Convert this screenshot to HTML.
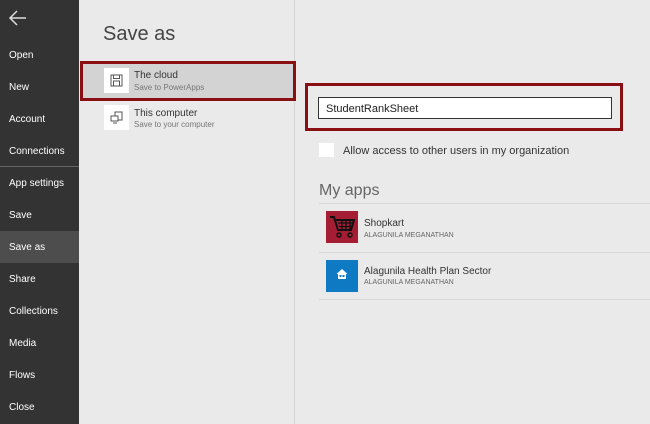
<!DOCTYPE html>
<html><head><meta charset="utf-8"><style>
*{margin:0;padding:0;box-sizing:border-box}
body{width:650px;height:424px;overflow:hidden;background:#eaeaea;font-family:"Liberation Sans",sans-serif;position:relative}
#side{position:absolute;left:0;top:0;width:79px;height:424px;background:#333333;color:#fff}
.mi{position:absolute;left:9px;font-size:10px;color:#fff;margin-top:1px}
#sel{position:absolute;left:0;top:231px;width:79px;height:32px;background:#4d4d4d}
#sep{position:absolute;left:0;top:166px;width:79px;height:1px;background:#666}
#mid{position:absolute;left:79px;top:0;width:216px;height:424px;background:#eaeaea;border-right:1px solid #d4d4d4}
.abs{position:absolute}
</style></head><body>
<div id="side">
<svg class="abs" style="left:8px;top:9px" width="20" height="18" viewBox="0 0 20 18"><path d="M18 9H2M9 2L2 9l7 7" fill="none" stroke="#ddd" stroke-width="1.5"/></svg>
<div id="sep"></div>
<div id="sel"></div>
<div class="mi" style="top:49px">Open</div>
<div class="mi" style="top:81px">New</div>
<div class="mi" style="top:113px">Account</div>
<div class="mi" style="top:145px">Connections</div>
<div class="mi" style="top:177px">App settings</div>
<div class="mi" style="top:209px">Save</div>
<div class="mi" style="top:241px">Save as</div>
<div class="mi" style="top:273px">Share</div>
<div class="mi" style="top:305px">Collections</div>
<div class="mi" style="top:337px">Media</div>
<div class="mi" style="top:369px">Flows</div>
<div class="mi" style="top:401px">Close</div>
</div>
<div id="mid"></div>
<div class="abs" style="left:103px;top:23px;font-size:20px;color:#444">Save as</div>
<div class="abs" style="left:80px;top:61px;width:216px;height:40px;border:3px solid #8a0f12;background:#e8e8e8"></div>
<div class="abs" style="left:83px;top:64px;width:210px;height:34px;background:#d3d3d3"></div>
<div class="abs" style="left:104px;top:68px;width:25px;height:25px;background:#fff"></div>
<svg class="abs" style="left:110px;top:74px" width="13" height="13" viewBox="0 0 13 13"><rect x="1" y="1" width="11" height="11" fill="none" stroke="#555"/><rect x="3.5" y="1" width="6" height="3.5" fill="none" stroke="#555"/><rect x="3.5" y="7" width="6" height="5" fill="none" stroke="#555"/></svg>
<div class="abs" style="left:134px;top:70px;font-size:10px;color:#333">The cloud</div>
<div class="abs" style="left:134px;top:83px;font-size:8px;color:#777">Save to PowerApps</div>
<div class="abs" style="left:104px;top:105px;width:25px;height:25px;background:#fff"></div>
<svg class="abs" style="left:110px;top:111px" width="13" height="13" viewBox="0 0 13 13"><rect x="5" y="1" width="7" height="8" fill="none" stroke="#555"/><rect x="1" y="5" width="7" height="5" fill="#fff" stroke="#555"/><path d="M3 12h4" stroke="#555"/></svg>
<div class="abs" style="left:134px;top:108px;font-size:10px;color:#333">This computer</div>
<div class="abs" style="left:134px;top:120px;font-size:8px;color:#777">Save to your computer</div>
<div class="abs" style="left:305px;top:83px;width:318px;height:48px;border:3px solid #8a0f12"></div>
<div class="abs" style="left:318px;top:97px;width:294px;height:22px;border:1px solid #333;background:#fff;font-size:11px;color:#222;padding:5px 0 0 7px">StudentRankSheet</div>
<div class="abs" style="left:319px;top:143px;width:15px;height:14px;background:#fff"></div>
<div class="abs" style="left:343px;top:145px;font-size:11px;color:#333">Allow access to other users in my organization</div>
<div class="abs" style="left:319px;top:182px;font-size:16px;color:#666">My apps</div>
<div class="abs" style="left:319px;top:203px;width:331px;height:1px;background:#d8d8d8"></div>
<div class="abs" style="left:326px;top:211px;width:32px;height:32px;background:#a41d33"></div>
<svg class="abs" style="left:328px;top:214px" width="28" height="26" viewBox="0 0 28 26"><path d="M2 3h4l4 13h13l3-10H8" fill="none" stroke="#111" stroke-width="2"/><path d="M10 9h15M11 12.5h13M14 6v10M18 6v10M22 6v10" stroke="#111" stroke-width="1.3"/><circle cx="11" cy="21" r="2" fill="none" stroke="#111" stroke-width="1.5"/><circle cx="22" cy="21" r="2" fill="none" stroke="#111" stroke-width="1.5"/></svg>
<div class="abs" style="left:364px;top:218px;font-size:10px;color:#333">Shopkart</div>
<div class="abs" style="left:364px;top:232px;font-size:7px;color:#666">ALAGUNILA MEGANATHAN</div>
<div class="abs" style="left:319px;top:252px;width:331px;height:1px;background:#d8d8d8"></div>
<div class="abs" style="left:326px;top:260px;width:32px;height:32px;background:#0e7ac4"></div>
<svg class="abs" style="left:336px;top:268px" width="12" height="12" viewBox="0 0 12 12"><path d="M6 1L0.5 6H2v5h8V6h1.5z" fill="#fff"/><rect x="3.5" y="7" width="2" height="2" fill="#0e7ac4"/><rect x="6.5" y="7" width="2" height="2" fill="#0e7ac4"/></svg>
<div class="abs" style="left:364px;top:266px;font-size:10px;color:#333">Alagunila Health Plan Sector</div>
<div class="abs" style="left:364px;top:279px;font-size:7px;color:#666">ALAGUNILA MEGANATHAN</div>
<div class="abs" style="left:319px;top:299px;width:331px;height:1px;background:#d8d8d8"></div>
</body></html>
